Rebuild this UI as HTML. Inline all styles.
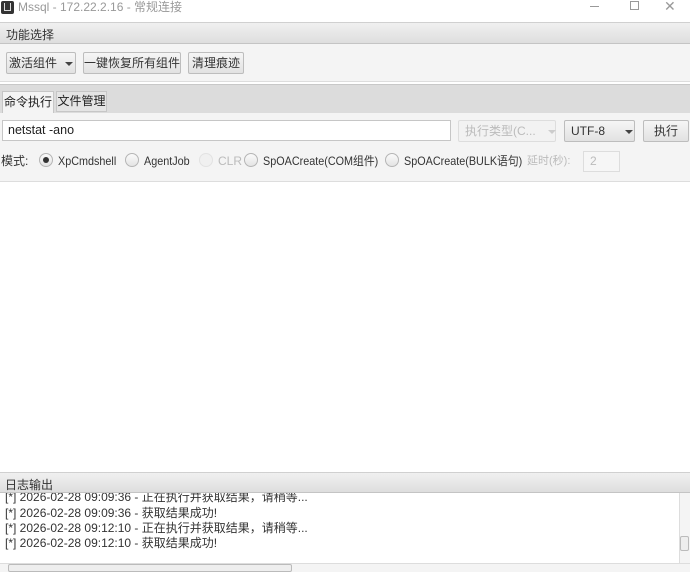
<!DOCTYPE html>
<html><head><meta charset="utf-8"><style>
*{box-sizing:border-box;margin:0;padding:0}
body{width:690px;height:572px;overflow:hidden;background:#fff;font-family:"Liberation Sans","Noto Sans CJK SC",sans-serif;font-size:12px;color:#222;position:relative}
.a{position:absolute;white-space:nowrap}
.btn{position:absolute;white-space:nowrap;height:22px;border:1px solid #bdbdbd;border-radius:2px;background:linear-gradient(#f6f6f6,#e2e2e2);font-size:12px;line-height:20px;text-align:center;color:#333}
.tri{display:inline-block;width:0;height:0;border-left:4px solid transparent;border-right:4px solid transparent;border-top:4px solid #444;vertical-align:middle;margin-left:8px}
.rad{position:absolute;width:14px;height:14px;border-radius:50%;border:1px solid #b5b5b5;background:linear-gradient(#fafafa,#e4e4e4);top:153px}
.lbl{position:absolute;white-space:nowrap;top:153px;line-height:16px;font-size:12px;color:#333}
.sq{transform-origin:0 50%;transform:scaleX(0.9)}
.log{position:absolute;white-space:nowrap;left:5px;font-size:12px;color:#333;line-height:15px}
</style></head><body>
<div class="a" style="left:0;top:0;width:690px;height:22px;background:#fff"></div>
<div class="a" style="left:1px;top:1px;width:13px;height:13px;background:#333;border-radius:2px"></div>
<div class="a" style="left:4px;top:3px;width:7px;height:8px;border:1.5px solid #ddd;border-top:none"></div>
<div class="a" style="left:18px;top:0;line-height:14px;color:#999;font-size:12px">Mssql - 172.22.2.16 - 常规连接</div>
<div class="a" style="left:590px;top:6px;width:9px;height:1px;background:#999"></div>
<div class="a" style="left:630px;top:1px;width:9px;height:9px;border:1px solid #999"></div>
<div class="a" style="left:664px;top:-2px;color:#999;font-size:14px">✕</div>
<div class="a" style="left:0;top:22px;width:690px;height:22px;background:linear-gradient(#f0f0f0,#dedede);border-top:1px solid #d0d0d0;border-bottom:1px solid #c4c4c4"></div>
<div class="a" style="left:6px;top:26px;color:#333">功能选择</div>
<div class="a" style="left:0;top:44px;width:690px;height:38px;background:#f4f4f4;border-bottom:1px solid #ddd"></div>
<div class="btn" style="left:6px;top:52px;width:70px">激活组件<span class="tri"></span></div>
<div class="btn" style="left:83px;top:52px;width:98px">一键恢复所有组件</div>
<div class="btn" style="left:188px;top:52px;width:56px">清理痕迹</div>
<div class="a" style="left:0;top:84px;width:690px;height:29px;background:#dcdcdc;border-top:1px solid #c8c8c8"></div>
<div class="a" style="left:2px;top:91px;width:52px;height:22px;background:#f4f4f4;border:1px solid #c6c6c6;border-bottom:none;line-height:20px;text-align:center">命令执行</div>
<div class="a" style="left:56px;top:91px;width:51px;height:21px;background:#e4e4e4;border:1px solid #c6c6c6;line-height:19px;text-align:center">文件管理</div>
<div class="a" style="left:0;top:113px;width:690px;height:69px;background:#f4f4f4;border-bottom:1px solid #ddd"></div>
<div class="a" style="left:2px;top:120px;width:449px;height:21px;background:#fff;border:1px solid #c6c6c6;padding-left:5px;line-height:19px;font-size:12.5px">netstat -ano</div>
<div class="btn" style="left:458px;top:120px;width:98px;color:#bbb;border-color:#ddd;background:#f2f2f2;text-align:left;padding-left:6px">执行类型(C...<span class="tri" style="border-top-color:#ccc;margin-left:12px"></span></div>
<div class="btn" style="left:564px;top:120px;width:71px;text-align:left;padding-left:6px">UTF-8<span class="tri" style="margin-left:20px"></span></div>
<div class="btn" style="left:643px;top:120px;width:46px">执行</div>
<div class="lbl" style="left:1px">模式:</div>
<div class="rad" style="left:39px"></div><div class="a" style="left:43px;top:157px;width:6px;height:6px;border-radius:50%;background:#333"></div>
<div class="lbl sq" style="left:58px">XpCmdshell</div>
<div class="rad" style="left:125px"></div><div class="lbl sq" style="left:144px">AgentJob</div>
<div class="rad" style="left:199px;border-color:#e2e2e2;background:#f0f0f0"></div><div class="lbl" style="left:218px;color:#bbb">CLR</div>
<div class="rad" style="left:244px"></div><div class="lbl sq" style="left:263px">SpOACreate(COM组件)</div>
<div class="rad" style="left:385px"></div><div class="lbl sq" style="left:404px">SpOACreate(BULK语句)</div>
<div class="lbl" style="left:527px;color:#bbb;font-size:11px">延时(秒):</div>
<div class="a" style="left:583px;top:151px;width:37px;height:21px;border:1px solid #ddd;background:#f6f6f6;color:#bbb;padding-left:6px;line-height:19px">2</div>
<div class="a" style="left:0;top:472px;width:690px;height:21px;background:linear-gradient(#f0f0f0,#dedede);border-top:1px solid #d0d0d0;border-bottom:1px solid #c4c4c4"></div>
<div class="a" style="left:5px;top:476px;color:#333">日志输出</div>
<div class="a" style="left:0;top:493px;width:679px;height:70px;background:#fff;overflow:hidden">
<div class="log" style="top:-3px">[*] 2026-02-28 09:09:36 - 正在执行并获取结果，请稍等...</div>
<div class="log" style="top:13px">[*] 2026-02-28 09:09:36 - 获取结果成功!</div>
<div class="log" style="top:28px">[*] 2026-02-28 09:12:10 - 正在执行并获取结果，请稍等...</div>
<div class="log" style="top:43px">[*] 2026-02-28 09:12:10 - 获取结果成功!</div>
</div>
<div class="a" style="left:679px;top:493px;width:11px;height:70px;background:#f4f4f4;border-left:1px solid #ddd"></div>
<div class="a" style="left:680px;top:536px;width:9px;height:15px;border:1px solid #bbb;border-radius:2px;background:#eee"></div>
<div class="a" style="left:0;top:563px;width:690px;height:9px;background:#f4f4f4;border-top:1px solid #ddd"></div>
<div class="a" style="left:8px;top:564px;width:284px;height:8px;border:1px solid #bbb;border-radius:2px;background:#eee"></div>
</body></html>
